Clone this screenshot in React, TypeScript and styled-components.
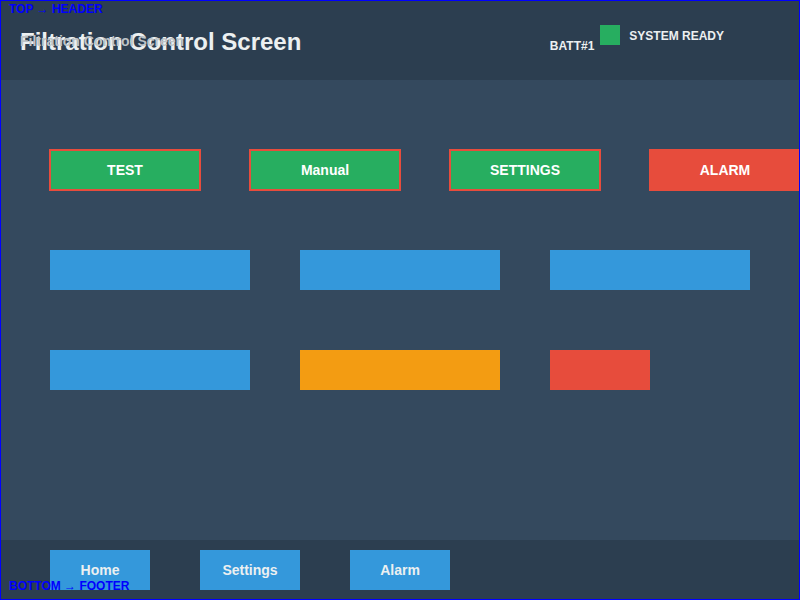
import styled, { createGlobalStyle } from "styled-components";

const GlobalStyle = createGlobalStyle`
  html, body {
    margin: 0;
    padding: 0;
    background: #ffffff;
  }
  body {
    font-family: "Liberation Sans", Arial, sans-serif;
  }
`;

const COLORS = {
  dark: "#2c3e50",
  panel: "#34495e",
  blue: "#3498db",
  orange: "#f39c12",
  red: "#e74c3c",
  green: "#27ae60",
  text: "#ecf0f1",
};

const topButtons = [
  { label: "TEST", bg: COLORS.green },
  { label: "Manual", bg: COLORS.green },
  { label: "SETTINGS", bg: COLORS.green },
  { label: "ALARM", bg: COLORS.red },
];

const barRows = [
  [
    { w: 200, bg: COLORS.blue },
    { w: 200, bg: COLORS.blue },
    { w: 200, bg: COLORS.blue },
  ],
  [
    { w: 200, bg: COLORS.blue },
    { w: 200, bg: COLORS.orange },
    { w: 100, bg: COLORS.red },
  ],
];

const footerButtons = ["Home", "Settings", "Alarm"];

const App = () => {
  return (
    <>
      <GlobalStyle />
      <Frame>
        <Header>
          <TitleWrap>
            <Title>Filtration Control Screen</Title>
            <SubTitle>Filtration Control Screen</SubTitle>
          </TitleWrap>
          <StatusGroup>
            <BattLabel>BATT#1</BattLabel>
            <StatusLed />
            <StatusText>SYSTEM READY</StatusText>
          </StatusGroup>
        </Header>

        <Main>
          <ButtonRow>
            {topButtons.map((each) => (
              <ModeButton key={each.label} bg={each.bg}>
                {each.label}
              </ModeButton>
            ))}
          </ButtonRow>
          {barRows.map((row, index) => (
            <BarRow key={index} top={index === 0 ? 59 : 60}>
              {row.map((bar, i) => (
                <Bar key={i} w={bar.w} bg={bar.bg} />
              ))}
            </BarRow>
          ))}
        </Main>

        <Footer>
          {footerButtons.map((label) => (
            <NavButton key={label}>{label}</NavButton>
          ))}
        </Footer>

        <DebugLabel $pos="top">TOP → HEADER</DebugLabel>
        <DebugLabel $pos="bottom">BOTTOM → FOOTER</DebugLabel>
      </Frame>
    </>
  );
};

const Frame = styled.div`
  position: relative;
  display: flex;
  flex-direction: column;
  width: 800px;
  height: 600px;
  box-sizing: border-box;
  border: 1px solid #0000ff;
  overflow: hidden;
  background: ${COLORS.panel};
`;

const Header = styled.header`
  display: flex;
  align-items: flex-start;
  justify-content: space-between;
  height: 79px;
  flex-shrink: 0;
  padding: 27px 75px 0 19px;
  box-sizing: border-box;
  background: ${COLORS.dark};
  color: ${COLORS.text};
`;

const TitleWrap = styled.div`
  position: relative;
`;

const Title = styled.h1`
  margin: 0;
  font-size: 24px;
  line-height: 28px;
  font-weight: 700;
  color: ${COLORS.text};
  white-space: nowrap;
`;

const SubTitle = styled.div`
  position: absolute;
  left: 0;
  top: 5px;
  font-size: 14px;
  line-height: 16px;
  font-weight: 700;
  color: #bdc3c7;
  white-space: nowrap;
`;

const StatusGroup = styled.div`
  display: flex;
  align-items: flex-start;
  margin-top: -3px;
  font-size: 12px;
  line-height: 14px;
  font-weight: 700;
  color: ${COLORS.text};
`;

const BattLabel = styled.span`
  margin-top: 14px;
  margin-right: 6px;
`;

const StatusLed = styled.span`
  width: 20px;
  height: 20px;
  background: ${COLORS.green};
  margin-right: 9px;
`;

const StatusText = styled.span`
  margin-top: 4px;
`;

const Main = styled.main`
  flex: 1;
  display: flex;
  flex-direction: column;
  padding: 69px 0 0 48px;
  box-sizing: border-box;
`;

const ButtonRow = styled.div`
  display: flex;
  gap: 48px;
`;

const ModeButton = styled.div<{ bg: string }>`
  flex-shrink: 0;
  display: flex;
  align-items: center;
  justify-content: center;
  width: 152px;
  height: 42px;
  box-sizing: border-box;
  border: 2px solid ${COLORS.red};
  background: ${({ bg }) => bg};
  color: #ffffff;
  font-size: 14px;
  font-weight: 700;
`;

const BarRow = styled.div<{ top: number }>`
  display: flex;
  gap: 50px;
  margin-top: ${({ top }) => top}px;
  padding-left: 1px;
`;

const Bar = styled.div<{ w: number; bg: string }>`
  width: ${({ w }) => w}px;
  height: 40px;
  background: ${({ bg }) => bg};
`;

const Footer = styled.footer`
  display: flex;
  gap: 50px;
  height: 59px;
  flex-shrink: 0;
  padding: 10px 0 0 49px;
  box-sizing: border-box;
  background: ${COLORS.dark};
`;

const NavButton = styled.div`
  display: flex;
  align-items: center;
  justify-content: center;
  width: 100px;
  height: 40px;
  background: ${COLORS.blue};
  color: ${COLORS.text};
  font-size: 14px;
  font-weight: 700;
`;

const DebugLabel = styled.div<{ $pos: "top" | "bottom" }>`
  position: absolute;
  left: 8px;
  ${({ $pos }) => ($pos === "top" ? "top: 1px;" : "bottom: 6px;")}
  font-size: 12px;
  line-height: 14px;
  font-weight: 700;
  color: #0000ff;
  white-space: nowrap;
`;

export default App;
